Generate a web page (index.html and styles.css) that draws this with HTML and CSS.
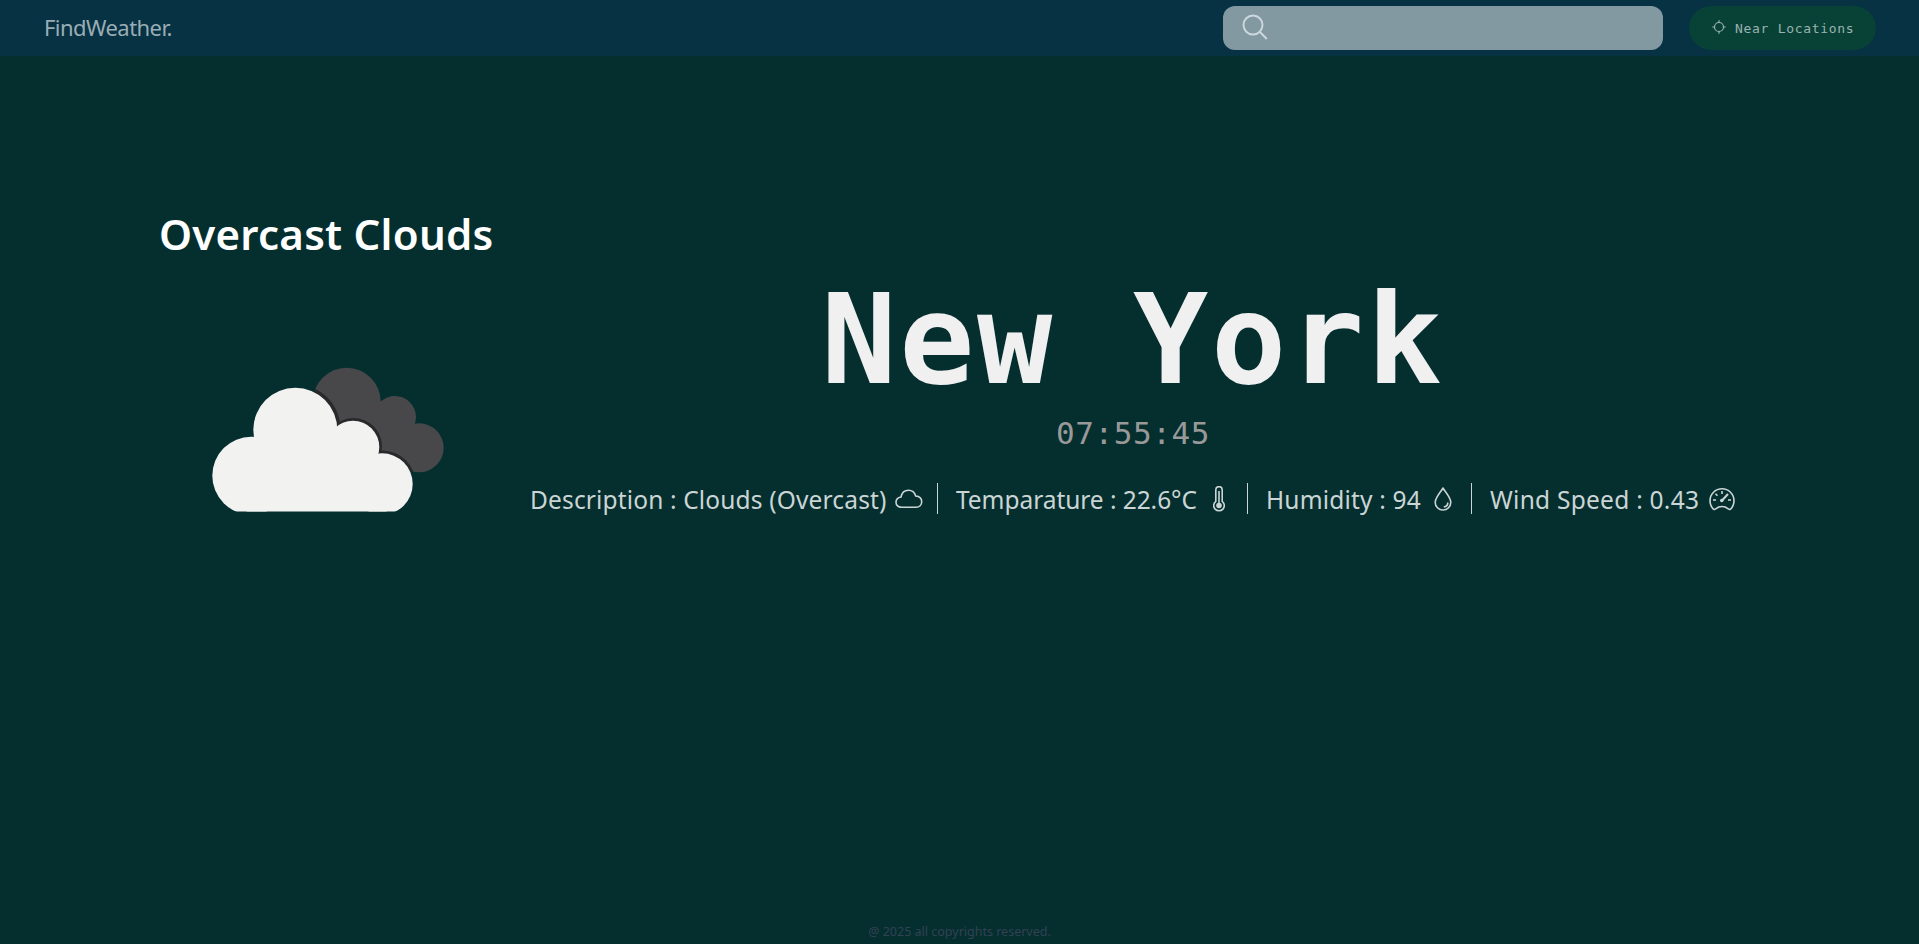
FILE: index.html
```html
<!DOCTYPE html>
<html lang="en">
<head>
<meta charset="utf-8">
<title>FindWeather</title>
<link rel="stylesheet" href="styles.css">
</head>
<body>
<header class="navbar">
  <span class="brand">FindWeather.</span>
  <div class="search">
    <svg class="search-icon" viewBox="0 0 26 26"><circle cx="11" cy="11" r="9.500"/><path d="M17.800 17.800L24.800 25"/></svg>
  </div>
  <button class="near">
    <svg class="near-icon" viewBox="0 0 14 14"><circle cx="7" cy="7" r="4.500"/><path d="M7 .3V3M7 11v2.700M.3 7H3M11 7h2.700"/></svg>
    <span>Near Locations</span>
  </button>
</header>
<main class="weather">
  <section class="summary">
    <h2 class="condition">Overcast Clouds</h2>
    <svg class="clouds" viewBox="0 0 234 148">
      <defs>
        <clipPath id="back-shape"><circle cx="134.700" cy="34.700" r="34"/><circle cx="183" cy="50" r="21"/><circle cx="207.200" cy="80.800" r="24.500"/><path d="M134 20L184 46L203 104L120 95Z"/></clipPath>
        <clipPath id="flat-base"><path d="M0 0H234V144.500H0Z"/></clipPath>
      </defs>
      <g clip-path="url(#back-shape)">
        <path class="cloud-back" d="M0 0H234V148H0Z"/>
        <g class="cloud-edge"><circle cx="84" cy="62" r="44.500"/><circle cx="141.500" cy="79.500" r="28.500"/><circle cx="170.500" cy="116.500" r="33"/></g>
      </g>
      <g class="cloud-front" clip-path="url(#flat-base)"><circle cx="83.300" cy="62.700" r="42"/><circle cx="141" cy="80" r="26.300"/><circle cx="39.300" cy="108.700" r="39"/><circle cx="170" cy="117" r="30.700"/><path d="M42 75H125L165 90L175 147H35L27 100Z"/></g>
    </svg>
  </section>
  <section class="details">
    <h1 class="city">New York</h1>
    <p class="time">07:55:45</p>
    <div class="stats">
      <div class="stat description"><span>Description : Clouds (Overcast)</span>
        <svg class="icon cloud-icon" viewBox="0 0 28 20"><path d="M6.500 18.200C3.200 18.200 1 16.200 1 13.300C1 10.500 3 8.500 6 8C6.800 3.800 9.600 1.200 13.500 1.200C17 1.200 19.600 3.200 20.700 7C24.300 7.300 26.700 9.500 26.700 12.700C26.700 16 24.300 18.200 21 18.200Z"/></svg></div>
      <div class="stat temperature"><span>Temparature : 22.6°C</span>
        <svg class="icon thermometer-icon" viewBox="0 0 12 26"><path d="M2.800 15.300V3.800a3.200 3.200 0 0 1 6.400 0v11.500a5.300 5.300 0 1 1-6.400 0Z"/><path d="M6 5v14"/><circle class="solid" cx="6" cy="19.500" r="2.800"/></svg></div>
      <div class="stat humidity"><span>Humidity : 94</span>
        <svg class="icon drop-icon" viewBox="0 0 18 24"><path d="M9 1.200C6 5.500 1.200 10.800 1.200 15.200a7.800 7.800 0 0 0 15.600 0C16.800 10.800 12 5.500 9 1.200Z"/><path d="M13.800 15.500c0 2.600-1.600 4.200-4 4.500"/></svg></div>
      <div class="stat wind"><span>Wind Speed : 0.43</span>
        <svg class="icon gauge-icon" viewBox="0 0 26 24"><path d="M4.500 22.200A12 12 0 1 1 21.500 22.200Q20.500 23 19.300 21.800C15.500 18.800 10.500 18.800 6.700 21.800Q5.500 23 4.500 22.200Z"/><path d="M13 4v3M4 13h3M19 13h3M6.500 6.800l2 2"/><path class="needle" d="M19 7l-6 6.500"/><circle class="solid" cx="12.800" cy="13.500" r="1.800"/></svg></div>
    </div>
  </section>
</main>
<footer class="footer">@ 2025 all copyrights reserved.</footer>
</body>
</html>
```
FILE: styles.css
```css
* { box-sizing: border-box; }
body {
  margin: 0;
  height: 944px;
  display: flex;
  flex-direction: column;
  overflow: hidden;
  background: #042f2e;
  color: #cbd5d5;
  font-family: "Noto Sans", "Open Sans", sans-serif;
}
.navbar {
  height: 56px;
  flex: none;
  display: flex;
  align-items: center;
  padding: 0 43px 0 44px;
  background: #063244;
}
.brand {
  margin-right: auto;
  padding-bottom: 2px;
  font-size: 22px;
  letter-spacing: -.55px;
  color: #9badb4;
}
.search {
  width: 440px;
  height: 44px;
  margin-right: 26px;
  padding: 8px 19px;
  border-radius: 12px;
  background: #8399a1;
}
svg { display: block; fill: none; stroke: currentColor; }
.search-icon { width: 26px; height: 26px; color: #ced8df; stroke-width: 1.9; }
.near {
  width: 187px;
  height: 44px;
  padding: 0 0 0 23px;
  display: flex;
  align-items: center;
  gap: 9px;
  border: 0;
  border-radius: 22px;
  background: #084237;
  color: #9bb3af;
  font: 13px "DejaVu Sans Mono", monospace;
  letter-spacing: .7px;
}
.near-icon { width: 14px; height: 14px; margin-top: -2px; stroke-width: 1.2; }
.weather { flex: 1; display: flex; }
.summary { width: 528px; padding: 146px 0 0 159px; }
.condition {
  margin: 0;
  font-size: 42px;
  line-height: 64px;
  font-weight: 600;
  letter-spacing: .25px;
  white-space: nowrap;
  color: #fff;
}
.clouds { width: 234px; height: 148px; margin: 101px 0 0 53px; stroke: none; }
.cloud-back { fill: #48484a; }
.cloud-edge { fill: #29292c; }
.cloud-front { fill: #f2f2f0; }
.details { width: 1210px; padding-top: 219px; }
.city {
  margin: 0;
  font: bold 125px/130px "DejaVu Sans Mono", monospace;
  letter-spacing: 2.7px;
  text-align: center;
  color: #f0f0f0;
}
.time {
  margin: 6px 0 0;
  font: 31px/44px "DejaVu Sans Mono", monospace;
  letter-spacing: .6px;
  text-align: center;
  color: #999;
}
.stats { display: flex; margin-top: 28px; font-size: 24.5px; }
.stat {
  height: 31px;
  display: flex;
  align-items: center;
  justify-content: space-between;
  padding-left: 18px;
  border-right: 1px solid #cbd5d5;
  white-space: nowrap;
}
.description { width: 410px; padding-left: 2px; padding-right: 14px; letter-spacing: .15px; }
.temperature { width: 310px; padding-right: 22px; letter-spacing: -.06px; }
.humidity { width: 224px; padding-right: 19px; letter-spacing: .18px; }
.wind { width: 263px; border: 0; letter-spacing: .26px; }
.stat span { padding-top: 1px; }
.icon { flex: none; margin-top: 1px; stroke-width: 1.6; }
.solid { fill: currentColor; stroke: none; }
.needle { stroke-width: 2; }
.cloud-icon { width: 28px; height: 20px; }
.thermometer-icon { width: 12px; height: 26px; }
.drop-icon { width: 18px; height: 24px; }
.gauge-icon { width: 26px; height: 24px; }
.footer {
  flex: none;
  height: 25px;
  line-height: 25px;
  text-align: center;
  font-size: 12.5px;
  color: #334155;
}
```
